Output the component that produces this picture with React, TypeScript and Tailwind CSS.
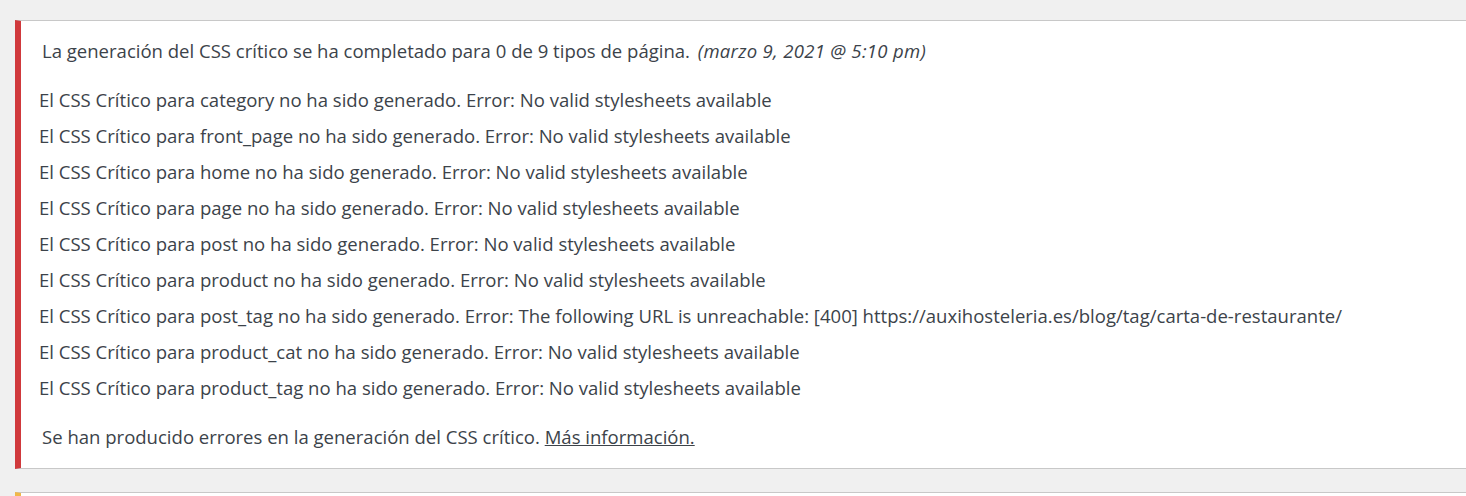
import React from 'react'

const errors = [
  'El CSS Crítico para category no ha sido generado. Error: No valid stylesheets available',
  'El CSS Crítico para front_page no ha sido generado. Error: No valid stylesheets available',
  'El CSS Crítico para home no ha sido generado. Error: No valid stylesheets available',
  'El CSS Crítico para page no ha sido generado. Error: No valid stylesheets available',
  'El CSS Crítico para post no ha sido generado. Error: No valid stylesheets available',
  'El CSS Crítico para product no ha sido generado. Error: No valid stylesheets available',
  'El CSS Crítico para post_tag no ha sido generado. Error: The following URL is unreachable: [400] https://auxihosteleria.es/blog/tag/carta-de-restaurante/',
  'El CSS Crítico para product_cat no ha sido generado. Error: No valid stylesheets available',
  'El CSS Crítico para product_tag no ha sido generado. Error: No valid stylesheets available',
]

const App: React.FC = () => {
  return (
    <div
      className="min-h-[496px] bg-[#f0f0f0] pt-[20px] pl-[15px] text-[18.55px] text-[#3c434a]"
      style={{ fontFamily: '"Open Sans", "Noto Sans", sans-serif' }}
    >
      {/* Critical CSS notice */}
      <div className="bg-white border-y border-[#c8c8c8] border-l-[6px] border-l-[#d0393c] h-[449px] flex flex-col">
        <p className="pl-[21px] pt-[17px] leading-[26px]">
          La generación del CSS crítico se ha completado para 0 de 9 tipos de página.{' '}
          <em className="tracking-[0.3px] pl-[3px]">(marzo 9, 2021 @ 5:10 pm)</em>
        </p>
        <ul className="pl-[18px] pt-[23px] flex flex-col gap-[10px]">
          {errors.map((e) => (
            <li key={e} className="leading-[26px]">
              {e}
            </li>
          ))}
        </ul>
        <p className="pl-[21px] pt-[23px] leading-[26px]">
          Se han producido errores en la generación del CSS crítico.{' '}
          <a href="#" className="underline">
            Más información.
          </a>
        </p>
      </div>

      {/* next notice */}
      <div className="mt-[23px] h-[10px] bg-white border-t border-[#c8c8c8] border-l-[6px] border-l-[#f0b849]" />
    </div>
  )
}

export default App
